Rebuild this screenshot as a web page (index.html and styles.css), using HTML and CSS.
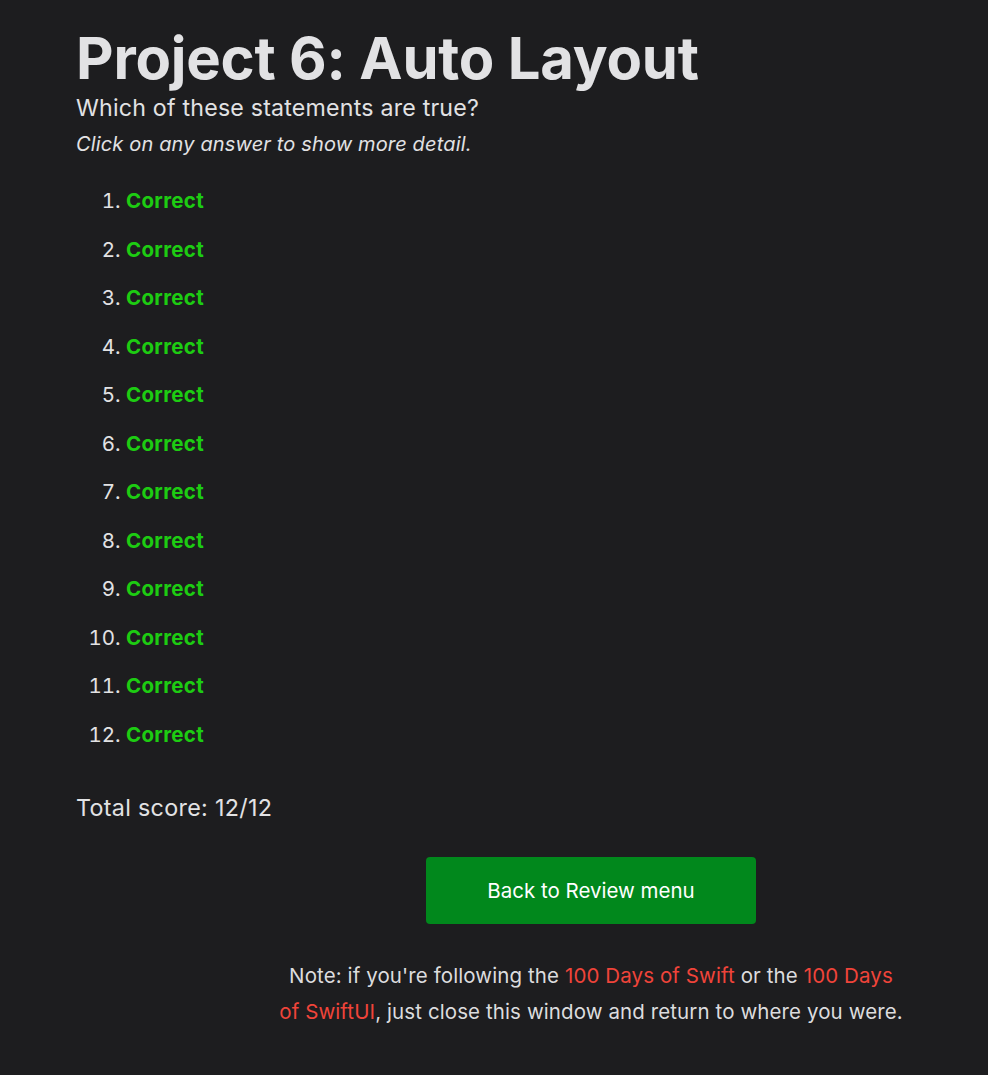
FILE: index.html
```html
<!DOCTYPE html>
<html>
<head>
<meta charset="utf-8">
<link rel="stylesheet" href="styles.css">
</head>
<body>
<div class="page">
  <h1 class="title">Project 6: Auto Layout</h1>
  <p class="question">Which of these statements are true?</p>
  <p class="hint">Click on any answer to show more detail.</p>
  <ol class="answers">
    <li><span class="correct">Correct</span></li>
    <li><span class="correct">Correct</span></li>
    <li><span class="correct">Correct</span></li>
    <li><span class="correct">Correct</span></li>
    <li><span class="correct">Correct</span></li>
    <li><span class="correct">Correct</span></li>
    <li><span class="correct">Correct</span></li>
    <li><span class="correct">Correct</span></li>
    <li><span class="correct">Correct</span></li>
    <li><span class="correct">Correct</span></li>
    <li><span class="correct">Correct</span></li>
    <li><span class="correct">Correct</span></li>
  </ol>
  <p class="score">Total score: 12/12</p>
  <div class="actions">
    <a class="button" href="#">Back to Review menu</a>
    <p class="note">Note: if you're following the <a href="#">100 Days of Swift</a> or the <a href="#">100 Days of SwiftUI</a>, just close this window and return to where you were.</p>
  </div>
</div>
</body>
</html>
```
FILE: styles.css
```css
html, body {
  margin: 0;
  padding: 0;
  background: #1d1d1f;
}
body {
  font-family: Inter, "Noto Sans", sans-serif;
  color: #e2e2e4;
}
.page {
  padding: 22px 0 0 76px;
}
.title {
  margin: 0;
  font-size: 58px;
  font-weight: 700;
  line-height: 72px;
  letter-spacing: -0.2px;
}
.question {
  margin: 0;
  font-size: 23.2px;
  line-height: 28px;
  letter-spacing: 0.2px;
}
.hint {
  margin: 6px 0 0;
  font-size: 20px;
  font-style: italic;
  line-height: 32px;
  letter-spacing: 0.15px;
}
.answers {
  margin: 25px 0 0;
  padding-left: 50px;
  font-size: 20.5px;
  line-height: 32px;
}
.answers li {
  margin-bottom: 16.5px;
}
.correct {
  color: #1dcc12;
  font-weight: 700;
  letter-spacing: 0.3px;
}
.score {
  margin: 41px 0 0;
  font-size: 23.3px;
  line-height: 32px;
  letter-spacing: 0.3px;
}
.actions {
  display: flex;
  flex-direction: column;
  align-items: center;
  width: 624px;
  margin: 33px 0 0 203px;
  padding-bottom: 40px;
}
.button {
  display: flex;
  align-items: center;
  justify-content: center;
  width: 330px;
  height: 67px;
  background: #01881c;
  color: #fff;
  border-radius: 4px;
  font-size: 20.5px;
  text-decoration: none;
}
.note {
  width: 624px;
  margin: 34px 0 0;
  text-align: center;
  font-size: 20.5px;
  line-height: 36px;
  color: #dcdcde;
  letter-spacing: 0.1px;
}
.note a {
  color: #f0443a;
  text-decoration: none;
}
```
